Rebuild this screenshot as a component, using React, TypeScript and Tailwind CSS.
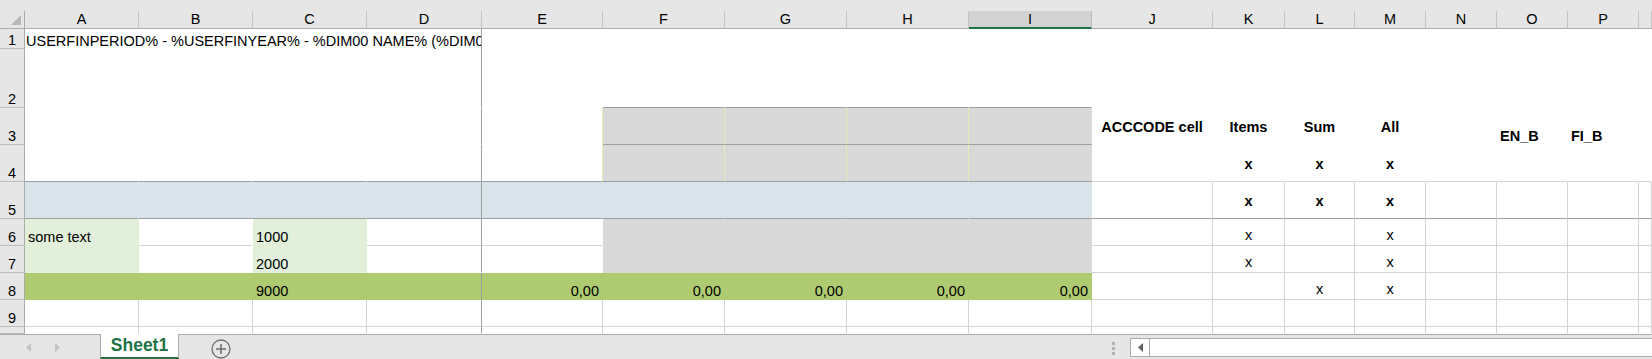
import React from "react";

type Spec = {
  bg?: string;
  r?: "g" | "d" | "l" | "n";
  b?: "g" | "d" | "n";
  t?: string;
  a?: "l" | "c" | "cs" | "r";
  bold?: boolean;
};

const COLS = [
  "w-[114px]",
  "w-[114px]",
  "w-[114px]",
  "w-[115px]",
  "w-[121px]",
  "w-[122px]",
  "w-[122px]",
  "w-[122px]",
  "w-[123px]",
  "w-[121px]",
  "w-[72px]",
  "w-[70px]",
  "w-[71px]",
  "w-[71px]",
  "w-[71px]",
  "w-[71px]",
  "flex-1",
];
const LETTERS = ["A", "B", "C", "D", "E", "F", "G", "H", "I", "J", "K", "L", "M", "N", "O", "P", ""];

const RB = {
  g: "border-r-[#d4d4d4]",
  d: "border-r-[#9e9e9e]",
  l: "border-r-[#dcefb4]",
  n: "border-r-transparent",
};
const BB = {
  g: "border-b-[#d4d4d4]",
  d: "border-b-[#9e9e9e]",
  n: "border-b-transparent",
};
// Excel puts text on the bottom of the cell unless told otherwise
const AL = {
  l: "items-end justify-start pl-[3px] leading-[15px]",
  c: "items-center justify-center pt-[3px]",
  cs: "items-center justify-center pt-[6px]",
  r: "items-end justify-end pr-[3px] leading-[15px]",
};

const GRAY = "bg-[#d9d9d9]";
const BLUE = "bg-[#d9e4ea]";
const LG = "bg-[#e2efda]";
const OL = "bg-[#afcb71]";

const fill = (cells: Spec[], rest: Spec = { r: "g", b: "g" }) => {
  const out = [...cells];
  while (out.length < 17) out.push({ ...rest });
  return out;
};

const blank = (n: number, s: Spec): Spec[] => Array.from({ length: n }, () => ({ ...s }));

const x = (): Spec => ({ t: "x", a: "cs", r: "g", b: "g" });
const bx = (r: "g" | "n", b: "g" | "d"): Spec => ({ t: "x", a: "c", bold: true, r, b });

function Cell({ spec, w }: { spec: Spec; w: string }) {
  return (
    <div
      className={`${w} shrink-0 h-full flex overflow-hidden whitespace-nowrap border-r border-b ${spec.bg ?? "bg-white"} ${RB[spec.r ?? "g"]} ${BB[spec.b ?? "g"]} ${AL[spec.a ?? "l"]} ${spec.bold ? "font-bold" : ""}`}
    >
      {spec.t}
    </div>
  );
}

function RowHead({ n }: { n?: number }) {
  return (
    <div className="w-[25px] shrink-0 h-full flex items-end justify-center leading-[15px] bg-[#e6e6e6] border-r border-b border-r-[#ababab] border-b-[#bcbcbc]">
      {n}
    </div>
  );
}

function Row({ n, h, cells }: { n?: number; h: string; cells: Spec[] }) {
  return (
    <div className={`flex ${h}`}>
      <RowHead n={n} />
      {cells.map((c, i) => (
        <Cell key={i} spec={c} w={COLS[i]} />
      ))}
    </div>
  );
}

export default function App() {
  const N: Spec = { r: "n", b: "n" };

  const row2: Spec[] = [
    ...blank(3, N),
    { r: "d", b: "n" },
    { r: "n", b: "n" },
    ...blank(4, { r: "n", b: "d" }),
    ...blank(8, N),
  ];
  const row3: Spec[] = [
    ...blank(3, N),
    { r: "d", b: "n" },
    { r: "l", b: "n" },
    ...blank(3, { bg: GRAY, r: "l", b: "d" }),
    { bg: GRAY, r: "n", b: "d" },
    { t: "ACCCODE cell", a: "c", bold: true, r: "n", b: "n" },
    { t: "Items", a: "c", bold: true, r: "n", b: "n" },
    { t: "Sum", a: "c", bold: true, r: "n", b: "n" },
    { t: "All", a: "c", bold: true, r: "n", b: "n" },
    { r: "n", b: "n" },
    { t: "EN_B", a: "l", bold: true, r: "n", b: "n" },
    { t: "FI_B", a: "l", bold: true, r: "n", b: "n" },
    { r: "n", b: "n" },
  ];
  const row4: Spec[] = [
    ...blank(3, { r: "n", b: "d" }),
    { r: "d", b: "d" },
    { r: "l", b: "d" },
    ...blank(3, { bg: GRAY, r: "l", b: "d" }),
    { bg: GRAY, r: "n", b: "d" },
    { r: "n", b: "g" },
    bx("n", "g"),
    bx("n", "g"),
    bx("n", "g"),
    ...blank(4, { r: "n", b: "g" }),
  ];
  const row5: Spec[] = [
    ...blank(3, { bg: BLUE, r: "n", b: "d" }),
    { bg: BLUE, r: "d", b: "d" },
    ...blank(5, { bg: BLUE, r: "n", b: "d" }),
    { r: "g", b: "d" },
    bx("g", "d"),
    bx("g", "d"),
    bx("g", "d"),
    ...blank(4, { r: "g", b: "d" }),
  ];
  const row6: Spec[] = fill([
    { bg: LG, r: "n", b: "n", t: "some text" },
    { r: "n", b: "g" },
    { bg: LG, r: "n", b: "n", t: "1000" },
    { r: "d", b: "g" },
    { r: "n", b: "g" },
    ...blank(4, { bg: GRAY, r: "n", b: "n" }),
    { r: "g", b: "g" },
    x(),
    { r: "g", b: "g" },
    x(),
  ]);
  const row7: Spec[] = fill([
    { bg: LG, r: "n", b: "n" },
    { r: "n", b: "n" },
    { bg: LG, r: "n", b: "n", t: "2000" },
    { r: "d", b: "n" },
    { r: "n", b: "n" },
    ...blank(4, { bg: GRAY, r: "n", b: "n" }),
    { r: "g", b: "g" },
    x(),
    { r: "g", b: "g" },
    x(),
  ]);
  const row8: Spec[] = fill([
    { bg: OL, r: "n", b: "n" },
    { bg: OL, r: "n", b: "n" },
    { bg: OL, r: "n", b: "n", t: "9000" },
    { bg: OL, r: "d", b: "n" },
    ...blank(5, { bg: OL, r: "n", b: "n", t: "0,00", a: "r" }),
    { r: "g", b: "g" },
    { r: "g", b: "g" },
    x(),
    x(),
  ]);
  const row9: Spec[] = fill([...blank(3, { r: "g", b: "g" }), { r: "d", b: "g" }]);
  const row10: Spec[] = fill([...blank(3, { r: "g", b: "n" }), { r: "d", b: "n" }], { r: "g", b: "n" });

  return (
    <div className="w-[1652px] h-[359px] overflow-hidden bg-white text-black text-[14.5px] leading-[17px] font-['Liberation_Sans',Arial,sans-serif]">
      <div className="h-[11px] bg-[#e6e6e6]" />

      {/* column headers */}
      <div className="flex h-[18px] bg-[#e6e6e6]">
        <div className="w-[25px] shrink-0 border-r border-b border-[#ababab]">
          <svg width="24" height="17" viewBox="0 0 24 17">
            <polygon points="21,4 21,14 11,14" fill="#b7b7b7" />
          </svg>
        </div>
        {LETTERS.map((l, i) =>
          l === "I" ? (
            <div
              key={i}
              className={`${COLS[i]} shrink-0 flex items-center justify-center bg-[#d2d2d2] border-r border-r-[#bcbcbc] border-b-2 border-b-[#217346]`}
            >
              {l}
            </div>
          ) : (
            <div
              key={i}
              className={`${COLS[i]} shrink-0 flex items-center justify-center border-r border-b border-r-[#c4c4c4] border-b-[#ababab]`}
            >
              {l}
            </div>
          )
        )}
      </div>

      {/* row 1: the title runs over A:D and is cut at the D border */}
      <div className="flex h-[20px]">
        <RowHead n={1} />
        <div className="w-[457px] shrink-0 h-full flex items-end pl-[1px] leading-[15px] overflow-hidden whitespace-nowrap border-r border-r-[#9e9e9e]">
          USERFINPERIOD% - %USERFINYEAR% - %DIM00 NAME% (%DIM00 CODE%)
        </div>
        {blank(13, N).map((c, i) => (
          <Cell key={i} spec={c} w={COLS[i + 4]} />
        ))}
      </div>

      <Row n={2} h="h-[59px]" cells={row2} />
      <Row n={3} h="h-[37px]" cells={row3} />
      <Row n={4} h="h-[37px]" cells={row4} />
      <Row n={5} h="h-[37px]" cells={row5} />
      <Row n={6} h="h-[27px]" cells={row6} />
      <Row n={7} h="h-[27px]" cells={row7} />
      <Row n={8} h="h-[27px]" cells={row8} />
      <Row n={9} h="h-[27px]" cells={row9} />
      <Row h="h-[7px]" cells={row10} />

      {/* sheet tabs + horizontal scrollbar */}
      <div className="flex h-[25px] bg-[#e6e6e6]">
        <div className="w-[100px] shrink-0 border-t border-[#ababab] flex items-center pl-[26px] gap-[24px]">
          <svg width="5" height="9" viewBox="0 0 5 9">
            <polygon points="5,0 5,9 0,4.5" fill="#c2c2c2" />
          </svg>
          <svg width="5" height="9" viewBox="0 0 5 9">
            <polygon points="0,0 0,9 5,4.5" fill="#c2c2c2" />
          </svg>
        </div>
        <div className="w-[79px] shrink-0 bg-white border-l border-r border-[#ababab] border-b-2 border-b-[#217346] flex items-center justify-center text-[17.5px] font-bold text-[#217346]">
          Sheet1
        </div>
        <div className="flex-1 border-t border-[#ababab] flex items-start">
          <svg className="ml-[32px] mt-[4px]" width="20" height="20" viewBox="0 0 20 20">
            <circle cx="10" cy="10" r="9" fill="none" stroke="#6e6e6e" strokeWidth="1.3" />
            <path d="M10 5v10M5 10h10" stroke="#6e6e6e" strokeWidth="1.5" />
          </svg>
          <div className="flex-1" />
          <div className="mt-[7px] flex flex-col gap-[2px]">
            <div className="w-[3px] h-[3px] bg-[#b3b3b3]" />
            <div className="w-[3px] h-[3px] bg-[#b3b3b3]" />
            <div className="w-[3px] h-[3px] bg-[#b3b3b3]" />
          </div>
          <div className="ml-[15px] mt-[3px] w-[522px] h-[19px] flex bg-white border border-r-0 border-[#ababab]">
            <div className="w-[19px] h-full flex items-center justify-center border-r border-[#ababab]">
              <svg width="5" height="9" viewBox="0 0 5 9">
                <polygon points="5,0 5,9 0,4.5" fill="#606060" />
              </svg>
            </div>
          </div>
        </div>
      </div>
    </div>
  );
}
